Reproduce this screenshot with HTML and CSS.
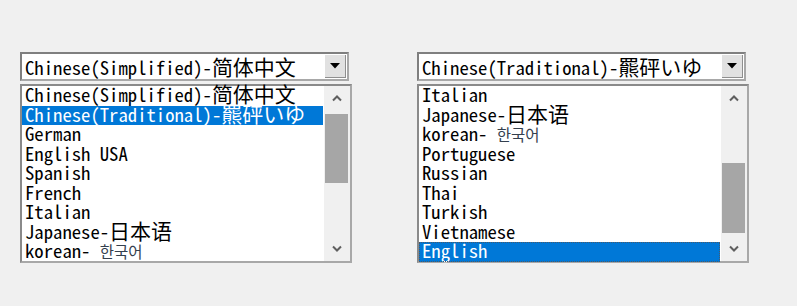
FILE: index.html
```html
<!DOCTYPE html>
<html>
<head>
<meta charset="utf-8">
<link rel="stylesheet" href="styles.css">
</head>
<body>
<div class="page">
  <div class="panel">
    <div class="combo">
      <span class="combo-text">Chinese(Simplified)-<span class="cjk">简体中文</span></span>
      <span class="combo-btn"><svg width="10" height="6" viewBox="0 0 10 6"><polygon points="0,0 10,0 5,5.5" fill="#000"/></svg></span>
    </div>
    <div class="listbox">
      <ul class="items">
        <li class="item">Chinese(Simplified)-<span class="cjk">简体中文</span></li>
        <li class="item sel">Chinese(Traditional)-<span class="cjk">羆砰いゆ</span></li>
        <li class="item">German</li>
        <li class="item">English USA</li>
        <li class="item">Spanish</li>
        <li class="item">French</li>
        <li class="item">Italian</li>
        <li class="item">Japanese-<span class="cjk">日本语</span></li>
        <li class="item">korean- <span class="kr">한국어</span></li>
      </ul>
      <div class="scrollbar">
        <div class="sb-btn"><svg width="10" height="7" viewBox="0 0 10 7"><polyline points="1,5.5 5,1.5 9,5.5" fill="none" stroke="#5f5f5f" stroke-width="2"/></svg></div>
        <div class="track"><div class="thumb thumb-top"></div></div>
        <div class="sb-btn"><svg width="10" height="7" viewBox="0 0 10 7"><polyline points="1,1.5 5,5.5 9,1.5" fill="none" stroke="#5f5f5f" stroke-width="2"/></svg></div>
      </div>
    </div>
  </div>
  <div class="panel">
    <div class="combo">
      <span class="combo-text">Chinese(Traditional)-<span class="cjk">羆砰いゆ</span></span>
      <span class="combo-btn"><svg width="10" height="6" viewBox="0 0 10 6"><polygon points="0,0 10,0 5,5.5" fill="#000"/></svg></span>
    </div>
    <div class="listbox">
      <ul class="items">
        <li class="item">Italian</li>
        <li class="item">Japanese-<span class="cjk">日本语</span></li>
        <li class="item">korean- <span class="kr">한국어</span></li>
        <li class="item">Portuguese</li>
        <li class="item">Russian</li>
        <li class="item">Thai</li>
        <li class="item">Turkish</li>
        <li class="item">Vietnamese</li>
        <li class="item sel focus">English</li>
      </ul>
      <div class="scrollbar">
        <div class="sb-btn"><svg width="10" height="7" viewBox="0 0 10 7"><polyline points="1,5.5 5,1.5 9,5.5" fill="none" stroke="#5f5f5f" stroke-width="2"/></svg></div>
        <div class="track"><div class="thumb thumb-bottom"></div></div>
        <div class="sb-btn"><svg width="10" height="7" viewBox="0 0 10 7"><polyline points="1,1.5 5,5.5 9,1.5" fill="none" stroke="#5f5f5f" stroke-width="2"/></svg></div>
      </div>
    </div>
  </div>
</div>
</body>
</html>
```
FILE: styles.css
```css
* { box-sizing: border-box; margin: 0; padding: 0; }
body {
  background: #f0f0f0;
  width: 797px;
  height: 306px;
  overflow: hidden;
  font-family: "Noto Sans Mono CJK SC", "Liberation Mono", monospace;
  color: #000;
}
.page {
  display: flex;
  gap: 65px;
  padding: 52px 0 0 20px;
}
.panel {
  display: flex;
  flex-direction: column;
  gap: 3px;
  width: 332px;
}
.combo {
  width: 329px;
  height: 29px;
  display: flex;
  align-items: center;
  background: #fff;
  border: 2px solid;
  border-color: #7f7f7f #a8a8a8 #a8a8a8 #7f7f7f;
  padding-left: 3px;
}
.combo-text {
  flex: 1;
  font-size: 18.7px;
  line-height: 20px;
  white-space: nowrap;
}
.combo-btn {
  width: 21px;
  height: 23px;
  margin-right: 1px;
  background: #e1e1e1;
  border-right: 1px solid #8f8f8f;
  border-bottom: 1px solid #8f8f8f;
  display: flex;
  align-items: center;
  justify-content: center;
}
.cjk {
  font-family: "Noto Sans CJK SC", sans-serif;
  font-size: 21px;
  line-height: 0;
}
.kr {
  font-family: "Noto Sans CJK KR", sans-serif;
  font-size: 15.5px;
  line-height: 0;
  color: #34404e;
}
.listbox {
  width: 332px;
  height: 179px;
  display: flex;
  background: #fff;
  border: 2px solid;
  border-color: #8a8a8a #a8a8a8 #a8a8a8 #8a8a8a;
}
.items {
  flex: 1;
  list-style: none;
}
.item {
  height: 19.5px;
  font-size: 18.7px;
  line-height: 15.5px;
  padding-left: 3px;
  white-space: nowrap;
}
.item.sel {
  background: #0078d7;
  color: #fff;
  margin-right: 1px;
}
.item.focus {
  outline: 1px dotted #4a5a6a;
  outline-offset: -1px;
}
.scrollbar {
  width: 26px;
  background: #f0f0f0;
  display: flex;
  flex-direction: column;
}
.sb-btn {
  height: 25px;
  display: flex;
  align-items: center;
  justify-content: center;
}
.track { flex: 1; }
.thumb {
  height: 69px;
  background: #a6a6a6;
  margin: 0 2px 0 1px;
}
.thumb-top { margin-top: 3px; }
.thumb-bottom { margin-top: 52px; height: 70px; }
```
